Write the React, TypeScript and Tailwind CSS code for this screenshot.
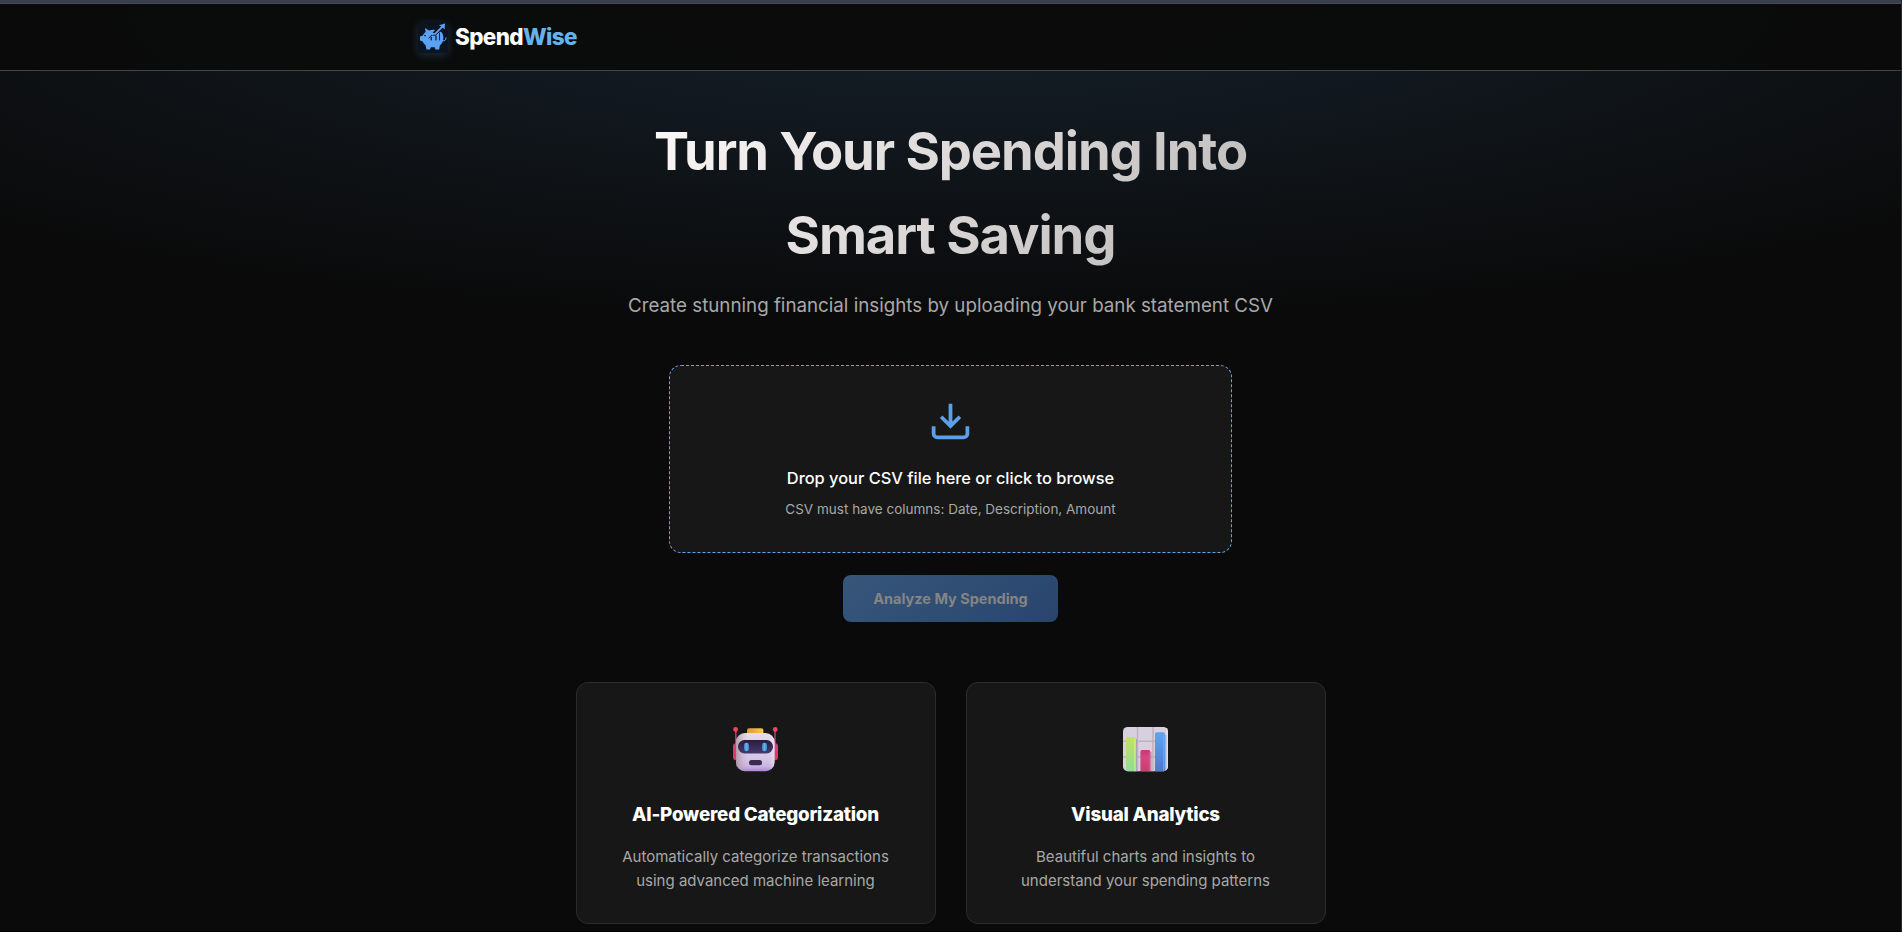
import React from "react";

function PiggyLogo() {
  return (
    <svg viewBox="0 0 30 31" className="h-[31px] w-[30px] rounded-[2px] bg-[#0c1421] shadow-[0_2px_10px_rgba(99,179,237,0.22)]">
      <path
        fill="#5aa2f5"
        d="M7 6 L11 8.6 C13 7.8 15.5 7.6 17 8 L13.6 12.2 L16.4 13 L19.6 11.4 L23 9.6 C25.4 12 26 15.6 25 19 C24.2 21 22.8 22.6 21.8 23.4 L21.2 27.6 H17.4 L16.8 25.2 H12.8 L12 27.6 H8.4 L7.6 23.2 C6.2 22.2 5.2 21 4.6 19.6 L2 18.4 V14.6 L4.8 13.6 C5.4 12 6.4 10.8 7.6 10 Z"
      />
      <path d="M24.4 18.8 C27 19.2 28.2 17.8 28 15.4" fill="none" stroke="#5aa2f5" strokeWidth="1" />
      <g fill="#0c1421">
        <rect x="12.6" y="14.8" width="1.2" height="3.6" />
        <rect x="17.4" y="13.6" width="1.2" height="4.8" />
        <rect x="21" y="11" width="0.9" height="7.4" />
        <rect x="6.2" y="13" width="1.6" height="1.2" />
      </g>
      <path d="M10.6 16.2 L14 13 L17.6 13.4 L22 8.6" fill="none" stroke="#0c1421" strokeWidth="0.9" />
      <path d="M13.4 12 L17.4 11.6 L24.4 4.6" fill="none" stroke="#5aa2f5" strokeWidth="1.8" />
      <path d="M21 3.2 L27 1.4 L26.6 7.6 L24.6 5.6 Z" fill="#5aa2f5" />
    </svg>
  );
}

function Robot() {
  return (
    <svg viewBox="0 0 45 45" className="h-[45px] w-[45px]">
      <defs>
        <linearGradient id="face" x1="0" y1="0" x2="0" y2="1">
          <stop offset="0" stopColor="#e6dcec" />
          <stop offset="0.7" stopColor="#d5c5e4" />
          <stop offset="0.88" stopColor="#c9b1e0" />
          <stop offset="1" stopColor="#ab86d6" />
        </linearGradient>
        <linearGradient id="faceShade" x1="0" y1="0" x2="1" y2="0">
          <stop offset="0" stopColor="#a58a90" stopOpacity="0.75" />
          <stop offset="0.3" stopColor="#c8b3c8" stopOpacity="0" />
          <stop offset="0.85" stopColor="#fff" stopOpacity="0" />
          <stop offset="1" stopColor="#fff" stopOpacity="0.35" />
        </linearGradient>
        <linearGradient id="visor" x1="0" y1="0" x2="0" y2="1">
          <stop offset="0" stopColor="#2b1c3b" />
          <stop offset="1" stopColor="#453a70" />
        </linearGradient>
        <linearGradient id="hat" x1="0" y1="0" x2="1" y2="0">
          <stop offset="0" stopColor="#dd9638" />
          <stop offset="1" stopColor="#f6ca48" />
        </linearGradient>
        <linearGradient id="ear" x1="0" y1="0" x2="0" y2="1">
          <stop offset="0" stopColor="#d43f85" />
          <stop offset="1" stopColor="#dc3a56" />
        </linearGradient>
        <linearGradient id="eye" x1="0" y1="0" x2="1" y2="0">
          <stop offset="0" stopColor="#3b7dc4" />
          <stop offset="0.5" stopColor="#65b1ee" />
          <stop offset="1" stopColor="#3f7ec8" />
        </linearGradient>
      </defs>
      <rect x="2" y="3" width="1.6" height="16" fill="#b73863" />
      <rect x="41.2" y="3" width="1.6" height="16" fill="#b73863" />
      <circle cx="2.6" cy="2.5" r="2.4" fill="#ee4262" />
      <circle cx="42.2" cy="2.5" r="2.4" fill="#ee4262" />
      <rect x="0" y="16.3" width="7" height="17" rx="3" fill="url(#ear)" />
      <rect x="38" y="16.3" width="7" height="17" rx="3" fill="url(#ear)" />
      <rect x="14" y="1.2" width="16.4" height="7" rx="2.2" fill="url(#hat)" />
      <rect x="3" y="6" width="38.6" height="38.2" rx="9" fill="url(#face)" />
      <rect x="3" y="6" width="38.6" height="38.2" rx="9" fill="url(#faceShade)" />
      <rect x="5" y="13" width="35" height="13.4" rx="6.5" fill="url(#visor)" />
      <rect x="11" y="15.8" width="5" height="8.4" rx="2.4" fill="url(#eye)" />
      <rect x="29" y="15.8" width="5" height="8.4" rx="2.4" fill="url(#eye)" />
      <rect x="16" y="33" width="13" height="5.2" rx="2.5" fill="#3a2c50" />
    </svg>
  );
}

function BarChart() {
  return (
    <svg viewBox="0 0 45 45" className="h-[45px] w-[45px]">
      <defs>
        <linearGradient id="green" x1="0" y1="0" x2="0" y2="1">
          <stop offset="0" stopColor="#c0e266" />
          <stop offset="0.5" stopColor="#aade7c" />
          <stop offset="1" stopColor="#8edc9c" />
        </linearGradient>
        <linearGradient id="red" x1="0" y1="0" x2="0" y2="1">
          <stop offset="0" stopColor="#ca3878" />
          <stop offset="0.35" stopColor="#d84682" />
          <stop offset="1" stopColor="#c63f68" />
        </linearGradient>
        <linearGradient id="blue" x1="0" y1="0" x2="0" y2="1">
          <stop offset="0" stopColor="#5ea6ee" />
          <stop offset="0.5" stopColor="#558fdf" />
          <stop offset="1" stopColor="#4f78c8" />
        </linearGradient>
        <clipPath id="board">
          <rect width="45" height="44.2" rx="4.6" />
        </clipPath>
      </defs>
      <g clipPath="url(#board)">
        <rect width="45" height="45" fill="#d9d0df" />
        <path d="M14.5 0 V45 M30 0 V45 M0 14.3 H45 M0 30 H45" stroke="#bbb2c2" strokeWidth="1.5" />
        <rect x="43" width="2" height="45" fill="#e7dcea" />
        <path d="M13.3 12 V45 M28 25 V45 M42.8 8 V45" stroke="#a897ba" strokeWidth="1" />
        <path d="M3 45 V11.8 Q3 10 4.8 10 H11.2 Q13 10 13 11.8 V45 Z" fill="url(#green)" />
        <rect x="11" y="11.4" width="1.6" height="34" fill="#dcf57a" opacity="0.55" />
        <path d="M17.4 45 V24.9 Q17.4 23.1 19.2 23.1 H25.6 Q27.4 23.1 27.4 24.9 V45 Z" fill="url(#red)" />
        <rect x="25.6" y="25" width="1.4" height="20" fill="#e45c8c" opacity="0.5" />
        <path d="M32 45 V7 Q32 5.2 33.8 5.2 H40.2 Q42 5.2 42 7 V45 Z" fill="url(#blue)" />
        <rect x="40" y="7" width="1.6" height="38" fill="#6cb4f5" opacity="0.6" />
      </g>
    </svg>
  );
}

function Feature({ icon, title, lines }: { icon: React.ReactNode; title: string; lines: string[] }) {
  return (
    <div className="flex h-[242px] w-[360px] flex-col items-center rounded-xl border border-[#2c2c2c] bg-[#171717] pt-[44px] text-center">
      {icon}
      <h3 className="mt-[28px] text-[18.8px] leading-[30px] font-extrabold tracking-[-0.22px] whitespace-nowrap text-white">{title}</h3>
      <p className="mt-[15px] text-[15px] leading-6 whitespace-nowrap text-[#a8a8a8]">
        {lines[0]}
        <br />
        {lines[1]}
      </p>
    </div>
  );
}

export default function App() {
  return (
    <div className="flex h-[932px] w-full flex-col overflow-hidden border-r border-b border-r-[#2a2a2a] border-b-black bg-[#0a0a0a] font-['Inter',sans-serif]">
      <div className="h-1 shrink-0 border-b border-[#4a4a4e] bg-[#3a3f50]" />
      <div className="flex min-h-0 flex-1 flex-col bg-[radial-gradient(ellipse_1346px_320px_at_50%_0%,rgba(86,160,230,0.15),transparent_100%)]">
        <header className="flex h-[67px] shrink-0 items-center border-b border-[#444543] bg-[#0b0b0b]/95 pl-[418px]">
          <PiggyLogo />
          <span className="ml-[7px] text-[22.4px] leading-none font-extrabold tracking-[-0.6px] text-white">
            Spend<span className="text-[#63b3ed]">Wise</span>
          </span>
        </header>
        <main className="flex flex-col items-center">
          <h1 className="mt-[38px] bg-linear-135 from-[#fffafa] to-[#b8b5b5] bg-clip-text px-[8px] text-center text-[52.6px] leading-[84px] font-bold tracking-[-1.1px] whitespace-nowrap text-transparent">
            Turn Your Spending Into
            <br />
            Smart Saving
          </h1>
          <p className="mt-[13px] text-[18.75px] leading-[31px] whitespace-nowrap text-[#a8a8a8]">
            Create stunning financial insights by uploading your bank statement CSV
          </p>
          <div className="mt-[44px] flex h-[188px] w-[563px] flex-col items-center rounded-xl border border-dashed border-[#63a4f0] bg-[#171717]">
            <svg viewBox="0 0 24 24" className="mt-[32px] h-[45px] w-[45px]" fill="none" stroke="#5b9fe8" strokeWidth="2" strokeLinecap="butt" strokeLinejoin="miter">
              <path d="M21 15v4a2 2 0 0 1-2 2H5a2 2 0 0 1-2-2v-4M7 10l5 5 5-5M12 15V3" />
            </svg>
            <p className="mt-[22px] text-[16.4px] leading-[27px] font-medium whitespace-nowrap text-white">
              Drop your CSV file here or click to browse
            </p>
            <p className="mt-[6px] text-[13.5px] leading-[22px] whitespace-nowrap text-[#a8a8a8]">
              CSV must have columns: Date, Description, Amount
            </p>
          </div>
          <button className="mt-[22px] h-[47px] w-[215px] rounded-lg bg-linear-135 from-[#37567a] to-[#29456e] pt-px text-[14.5px] font-bold whitespace-nowrap text-[#858585]">
            Analyze My Spending
          </button>
          <div className="mt-[60px] flex gap-[30px]">
            <Feature icon={<Robot />} title="AI-Powered Categorization" lines={["Automatically categorize transactions", "using advanced machine learning"]} />
            <Feature icon={<BarChart />} title="Visual Analytics" lines={["Beautiful charts and insights to", "understand your spending patterns"]} />
          </div>
        </main>
      </div>
    </div>
  );
}
